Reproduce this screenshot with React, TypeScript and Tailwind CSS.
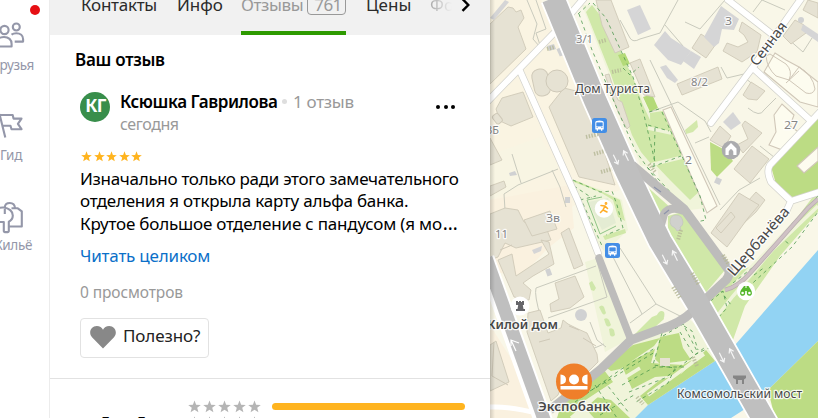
import type { ReactNode } from 'react'
import { clsx } from 'clsx'

const STAR = 'M6 0.4 L7.5 4.3 L11.8 4.5 L8.5 7.2 L9.6 11.3 L6 9 L2.4 11.3 L3.5 7.2 L0.2 4.5 L4.5 4.3 Z'

function Stars({ className, size }: { className?: string; size: number }) {
  return (
    <div className={clsx('flex', className)}>
      {[0, 1, 2, 3, 4].map((n) => (
        <svg key={n} width={size} height={size} viewBox="0 0 12 12" fill="currentColor">
          <path d={STAR} />
        </svg>
      ))}
    </div>
  )
}

function RailItem({ label, icon, className }: { label: string; icon: ReactNode; className?: string }) {
  return (
    <div className={clsx('flex h-[90px] flex-col items-end', className)}>
      <div className="h-[34px]">{icon}</div>
      <div className="whitespace-nowrap text-[13.5px] leading-[20px] tracking-[-0.35px]">{label}</div>
    </div>
  )
}

function Rail() {
  return (
    <nav className="relative h-full w-[50px] shrink-0 overflow-hidden border-r border-[#ececec] bg-white pt-[21px] text-[#9497a9]">
      <span className="absolute left-[30px] top-[5px] size-2.5 rounded-full bg-[#e60f14]" />
      <RailItem
        label="Друзья"
        className="pr-[15px]"
        icon={
          <svg width="40" height="30" viewBox="0 21 40 30" className="-mr-[6px]" fill="none" stroke="currentColor" strokeWidth="2.1" strokeLinejoin="round">
            <circle cx="4.5" cy="30" r="4.1" />
            <circle cx="16.3" cy="27" r="3.5" />
            <path d="M-4 46.5V44c0-4.3 3.3-7 8-7s7.6 2.7 7.6 7v2.5Z" />
            <path d="M11.5 34.6c1.3-1 2.8-1.4 4.8-1.4 4 0 6.8 2.2 6.8 6v2.4h-8.4" />
          </svg>
        }
      />
      <RailItem
        label="Гид"
        className="pr-[27px]"
        icon={
          <svg width="40" height="30" viewBox="0 111 40 30" className="-mr-[18px]" fill="none" stroke="currentColor" strokeWidth="2.1" strokeLinejoin="round">
            <path d="M-.5 114 5.3 137.5M-2 115h14.7l.8 3.6h8l-3.6 5.2 3.6 5.4H11.5l-1-3.4H3" />
          </svg>
        }
      />
      <RailItem
        label="Жильё"
        className="pr-[17px]"
        icon={
          <svg width="40" height="34" viewBox="0 198 40 34" className="-mr-[8px]" fill="none" stroke="currentColor" strokeWidth="2.1" strokeLinejoin="round">
            <path d="M-4 207.5c1.5-2.4 4.5-3.2 7.6-3 5.5.4 9.2 4 9.2 8 0 3.2-1.7 5-4 6.2V228c0 1.7-5 1.7-5 0v-9H-4" />
            <path d="M4.8 204.2c.2-2.6 2.4-4.2 5-4.2 3 0 5 2 5.2 5.2" />
            <path d="M11.5 205.3h6.3l4 3v15.2H9M4.8 206v5" />
          </svg>
        }
      />
    </nav>
  )
}

function Tabs() {
  return (
    <div className="relative h-[35px] shrink-0 overflow-hidden bg-[#f1f1f1] text-[17px] text-[#2b2b2b]">
      <div className="-mt-[8px] ml-[31px] flex h-[43px] whitespace-nowrap leading-[26px]">
        <span className="w-[96px] tracking-[-0.25px]">Контакты</span>
        <span className="w-[64px]">Инфо</span>
        <span className="flex h-full w-[105px] items-start border-b-4 border-[#2e9a00] text-[#999]">
          <span className="w-[66px] tracking-[-0.4px]">Отзывы</span>
          <span className="h-[23px] w-[39px] rounded border border-[#999] pl-[3px] text-center leading-[24px] tracking-[-0.5px]">761</span>
        </span>
        <span className="ml-[20px] w-[64px]">Цены</span>
        <span className="w-[22px] overflow-hidden bg-gradient-to-r from-[#aaa] to-[#f1f1f1] bg-clip-text text-transparent">Фото</span>
      </div>
      <svg className="absolute left-[410px] top-0" width="14" height="12" viewBox="0 0 14 12" fill="none" stroke="#000" strokeWidth="2.4">
        <path d="M2.5-1 8.3 5 2.5 10.8" />
      </svg>
    </div>
  )
}

function Review() {
  return (
    <section className="h-[344px] shrink-0 border-b border-[#e2e2e2] pt-[13px]">
      <h2 className="ml-[25px] text-[17px] font-semibold leading-[24px] tracking-[-0.28px]">Ваш отзыв</h2>
      <header className="ml-[30px] mt-[18px] flex h-[44px]">
        <div className="mt-[2px] flex size-[30px] shrink-0 items-center justify-center rounded-full bg-[#388e4b] pb-[3px] pl-px text-[17.5px] font-bold tracking-[-0.7px] text-white">КГ</div>
        <div className="ml-[10px] w-[315px]">
          <div className="flex items-center whitespace-nowrap leading-[23px]">
            <b className="w-[157px] text-[17px] font-semibold tracking-[-0.42px]">Ксюшка Гаврилова</b>
            <span className="mx-[5px] size-[5px] rounded-full bg-[#dedede]" />
            <span className="ml-px text-[17px] tracking-[-0.3px] text-[#999]">1 отзыв</span>
          </div>
          <div className="text-[16px] leading-[22px] tracking-[-0.4px] text-[#999]">сегодня</div>
        </div>
        <div className="mt-[15px] flex gap-[3.5px] pl-[1px]">
          <i className="size-1 rounded-full bg-black" />
          <i className="size-1 rounded-full bg-black" />
          <i className="size-1 rounded-full bg-black" />
        </div>
      </header>
      <Stars size={11} className="ml-[31px] mt-[17px] gap-[1.5px] text-[#ffb41f]" />
      <div className="ml-[30px] mt-[5.5px] whitespace-nowrap text-[17px] leading-[22.5px]">
        <p className="tracking-[-0.3px]">Изначально только ради этого замечательного</p>
        <p className="tracking-[-0.22px]">отделения я открыла карту альфа банка.</p>
        <p className="h-[22.5px] tracking-[-0.2px]">
          Крутое большое отделение с пандусом (я мо<span className="ml-px text-[19px] leading-none">…</span>
        </p>
      </div>
      <a className="ml-[30px] mt-[8.5px] block text-[17px] leading-[24px] tracking-[-0.2px] text-[#0b70c9]">Читать целиком</a>
      <div className="ml-[30px] mt-[13px] text-[15.5px] leading-[22px] tracking-[-0.1px] text-[#999]">0 просмотров</div>
      <button className="ml-[30px] mt-[15px] flex h-[40px] w-[129px] items-center rounded border border-[#e2e2e2] pb-[4px] pl-[9px]">
        <svg width="26" height="23" viewBox="0 0 26 23" fill="#888" className="mt-[3px]">
          <path d="M13 22.5 2 11.2C-2 6.5 1 0 6.8 0 9.7 0 12 1.6 13 3.7 14 1.6 16.3 0 19.2 0 25 0 28 6.5 24 11.2Z" />
        </svg>
        <span className="ml-[7px] text-[17px] leading-[24px] tracking-[-0.1px] text-[#222]">Полезно?</span>
      </button>
    </section>
  )
}

function Rating() {
  return (
    <section className="flex h-[60px] shrink-0 overflow-hidden">
      <div className="ml-[39px] mt-[36px] w-[99px] whitespace-nowrap text-[42px] font-bold leading-[32px]">4,4</div>
      <div className="mt-[20.5px] flex flex-col gap-[3.5px] text-[#b5b5b5]">
        <Stars size={13} className="gap-[2px]" />
        <Stars size={13} className="gap-[2px]" />
      </div>
      <div className="ml-[11px] mt-[24px] h-[7px] w-[193px] rounded-full bg-[#ffb41f]" />
    </section>
  )
}

const buildings = [
  '490,24 508,7 513,8 516,12 521,10 524,18 518,27 526,49 490,84',
  '496,109 502,98 523,92 533,117 511,126 500,121',
  '549,107 564,88 580,92 594,120 615,185 579,177',
  '490,138 502,160 490,165',
  '490,186 504,181 506,187 490,196',
  '596,0 611,0 629,47 615,53 602,25',
  '630,63 640,59 655,97 644,95',
  '605,75 609,74 614,90 618,100 622,102 630,126 627,129 618,112',
  '490,214 505,208 518,210 524,222 545,225 551,240 516,248 505,243 498,257 490,260',
  '524,220 550,211 557,229 532,236',
  '498,260 512,254 516,276 549,254 541,240 549,242 554,264 533,276 523,283 531,290 529,300 514,297',
  '561,233 569,228 583,265 574,269',
  '555,283 575,276 584,297 570,308 551,312 550,304 559,299',
  '528,313 540,310 548,333 561,328 563,320 568,324 578,329 587,333 597,354 598,362 580,380 565,377 558,395 551,401 527,332',
  '490,345 496,341 509,382 490,391',
  '677,84 718,67 722,79 682,95',
  '701,34 716,44 706,58 692,48',
  '742,22 761,35 757,52 742,62 723,51 727,43 738,47 748,42 744,35 739,31',
  '783,36 795,20 804,25 806,33 791,44',
  '808,0 818,3 818,18 803,10',
  '743,95 751,82 765,91 757,100 748,99',
  '720,126 731,136 724,148 710,140',
  '742,125 745,121 762,133 743,153 737,145 748,139',
  '752,146 769,159 750,183 734,169',
  '740,210 756,192 765,200 756,212 744,223',
  '711,233 739,193 759,205 748,218 727,247',
  '716,228 731,212 735,217 721,233',
]

const greyBuildings = [
  '654,45 665,31 671,38 691,51 681,65 668,60',
  '691,51 701,57 694,69 683,61',
  '721,6 739,19 734,30 722,29 719,43 714,47 704,37',
  '660,67 666,65 678,80 675,83 667,78',
  '803,24 818,34 818,42 801,30',
  '733,112 741,123 731,130 723,122',
  '627,10 640,5 651,29 638,35',
  '559,50 563,47 565,55 560,56',
  '532,250 542,246 541,251 534,254',
  '490,18 505,0 509,2 494,20',
]

const whiteBuildings = [
  '663,110 671,107 717,206 707,213',
  '775,53 786,60 799,67 818,82 818,107 800,102 764,72',
  '774,115 782,104 794,115 790,126 800,133 785,151 769,145 776,132',
  '797,166 818,147 818,161 804,173',
]

const parks = [
  '586,12 592,5 609,27 633,78 643,105 650,120 657,150 652,165 641,152 632,135 610,72',
  '650,113 663,111 701,190 690,200 670,180 651,160',
  '642,182 672,209 661,222 655,215',
  '668,228 668,216 682,212 725,270 703,296 690,285 668,252',
  '708,298 731,274 752,266 784,235 818,190 818,212 780,256 745,306 733,340 720,350 712,328',
  '632,337 652,317 662,313 664,319 655,327',
  '566,179 577,181 603,192 620,200 625,221 618,217 613,200 600,192',
  '603,236 625,229 626,233 605,240',
]

// riverside lawns under the embankment road
const brightParks = [
  '561,405 604,370 613,382 584,401 571,418 557,418',
  '604,366 633,345 660,338 654,346 620,369 611,371',
  '611,400 630,418 594,418 586,409 596,397',
  '622,366 655,349 651,363 683,365 692,360 680,375 655,377 632,389',
  '660,337 679,333 683,348 691,360 660,364 655,359',
  '640,396 660,380 681,374 706,350 715,361 648,405',
  '770,163 818,118 818,192 795,199 776,184',
  '818,341 768,390 775,418 818,418',
  '710,142 725,150 733,161 717,177 711,170',
]

const avenue = 'M553-2 595 100 626 170 645 210 660 241 698 304 767 425'
const sideRoads = 'M632 165 659 188 684 209 728 269Q731 274 726 280L693 311Q680 324 658 330L631 340 601 369 550 410'
const streets =
  'M486 103 556 31 585-3M520 71 578 201 598 253M803-4 753 67 711 123M728 0 773 35M753 68 810 120M822 110 770 165Q766 171 771 182L791 201 822 191M791 201 786 212'

function Arrows({ x, y }: { x: number; y: number }) {
  return (
    <g transform={`translate(${x} ${y}) rotate(-26)`} stroke="#fff" strokeOpacity=".85" strokeWidth="1.2" fill="none">
      <path d="M-5-5V5M-7.5 2 -5 5.5-2.5 2M6-3V7M3.5 0 6-4 8.5 0" />
    </g>
  )
}

function Bus({ x, y }: { x: number; y: number }) {
  return (
    <g transform={`translate(${x} ${y})`}>
      <rect x="-7.5" y="-7.5" width="15" height="15" rx="2.5" fill="#438ee6" />
      <path d="M-4.2 4V-3.2Q-4-5 0-5T4.2-3.2V4H2.8V5.3H1.5V4h-3V5.3h-1.3V4Z" fill="#fff" />
      <path d="M-2.8-2.7h5.6V.6h-5.6ZM-3 2h1.3M1.7 2H3" fill="#438ee6" stroke="#438ee6" strokeWidth=".7" />
    </g>
  )
}

interface MapLabel {
  text: string
  x: number
  y: number
  w: number
  size: number
  rotate?: number
  bold?: boolean
  muted?: boolean
}

const labels: MapLabel[] = [
  { text: '3/1', x: 576, y: 43, w: 17, size: 11, muted: true },
  { text: 'Дом Туриста', x: 575, y: 93, w: 75, size: 12 },
  { text: '3Б', x: 486, y: 134, w: 13, size: 11, muted: true },
  { text: '3', x: 725, y: 25, w: 7, size: 11, muted: true },
  { text: '8/2', x: 691, y: 86, w: 17, size: 11, muted: true },
  { text: '2', x: 685, y: 164, w: 7, size: 11, muted: true },
  { text: '27', x: 784, y: 129, w: 14, size: 11, muted: true },
  { text: '3в', x: 546, y: 222, w: 14, size: 11, muted: true },
  { text: '11', x: 495, y: 238, w: 13, size: 11, muted: true },
  { text: 'Сенная', x: 757, y: 67, w: 51, size: 14.5, rotate: -53 },
  { text: 'Щербанёва', x: 734, y: 277, w: 86, size: 14.5, rotate: -49 },
  { text: 'Жилой дом', x: 483, y: 329, w: 75, size: 12, bold: true },
  { text: 'Экспобанк', x: 538, y: 411, w: 72, size: 12.5, bold: true },
  { text: 'Комсомольский мост', x: 677, y: 398, w: 125, size: 12 },
]

function CityMap() {
  return (
    <svg className="block h-[418px] w-[328px] shrink-0" viewBox="490 0 328 418">
      <rect x="490" width="328" height="418" fill="#f9f7e8" />
      <path d="M490 0H541L584 105 620 190 575 205 490 260Z" fill="#faf4e2" />
      <path d="M490 155 540 137 559 168 490 200Z" fill="#f8f5e3" />
      <path d="M490 200 570 185 574 228 548 248 520 278 490 270ZM490 325 548 418H490Z" fill="#faf1df" />
      <path d="M582 5H600L633 78 658 130 658 170 640 165 615 90ZM648 112 660 108 706 208 690 210 660 185ZM566 179 603 190 622 200 628 230 605 252 595 240ZM585 262 598 258 627 340 605 352Z" fill="#f0f4da" />
      <path d="M556 418 604 368 633 343 690 320 710 338 720 358 648 407 640 418Z" fill="#f0f4da" />
      <path d="M818 250 735 345 715 361 648 405 635 418H731L745 409 768 390 818 341Z" fill="#92d3f3" />
      {parks.map((p) => <polygon key={p} points={p} fill="#d0e8a8" />)}
      {brightParks.map((p) => <polygon key={p} points={p} fill="#bcdc84" />)}
      <path d="M643 97 652 94 658 108 650 112ZM618 55 625 53 630 64 623 66Z" fill="#b4da78" />
      <path d="M589 283l3-2 4 7-2 3-3-1ZM599 307q3-3 5 0l2 6q-2 3-4 0ZM604 319q3-2 5 1l2 5q-3 3-5 0ZM609 329q3-2 5 1l1 5q-3 3-5 0ZM657 315q3-6 7-3 2 5-3 8Z" fill="#cfe7aa" />
      <path d="M685 130 691 125 697 120 698 127 693 132 686 134Z" fill="#d3e8ab" />
      <rect x="660" y="358" width="10" height="8" fill="#e6e2d3" />

      {/* yard outlines and paths */}
      <g fill="none" stroke="#c9cabd" strokeWidth="1">
        <path d="M536 0 546 29 536 33 541 48M527 0 537 24 533 39 540 47" />
        <path d="M505 210 504 194 518 185 558 169M552 170 560 187 566 207M512 154 521 183" />
        <path d="M620 20 630 38Q633 43 640 39L660 33 678 0M685 22 700 29 725 0M665 25 683 46" />
        <path d="M536 288 596 266M541 318Q534 295 536 288M548 318 607 297 596 258" />
        <path d="M590 322 597 340 606 347M571 358 604 344" />
        <path d="M612 255 642 314M620 248 656 304 682 317M630 323 656 304" />
        <path d="M650 112 678 102 705 121 711 132M650 60 720 205M695 143 709 137M721 67 727 78 744 74" />
        <path d="M748 108Q760 118 764 110L776 98M753 12 762 0 785 10M787 38 803 52 812 38M760 146 779 161" />
        <path d="M760 90 745 78M720 210 739 190 760 178" />
      </g>

      {buildings.map((p) => <polygon key={p} points={p} fill="#e6e2d3" stroke="#cfc9b8" strokeWidth=".9" />)}
      {greyBuildings.map((p) => <polygon key={p} points={p} fill="#d5d5d6" />)}
      {whiteBuildings.map((p) => <polygon key={p} points={p} fill="#fdfcef" stroke="#d0c7b8" strokeWidth="1.1" />)}
      <g fill="#e6e2d3" stroke="#cfc9b8">
        <rect x="533" y="69" width="16" height="27" rx="7" transform="rotate(-12 541 82)" />
        <circle cx="557" cy="81" r="11" />
        <rect x="494" y="114" width="7" height="10" rx="2" transform="rotate(-38 497 119)" />
      </g>
      <path d="M766 56 770 54 786 64Q793 71 789 80L776 76Q767 68 766 56ZM789 80 799 67Q813 75 815 89 813 95 806 93ZM786 83 799 71" fill="none" stroke="#d0c7b8" />
      <path d="M539 342 550 339M579 330 569 326M583 338 596 346M508 385 492 376 494 342M512 245 500 250" fill="none" stroke="#cfc9b8" />
      <g fill="#d0d1d2">
        <circle cx="581" cy="315" r="6" />
        <rect x="546" y="269" width="5" height="7" transform="rotate(-20 548 272)" />
        <rect x="715" y="178" width="6" height="6" transform="rotate(25 718 181)" />
        <rect x="558" y="48" width="5" height="8" transform="rotate(-25 560 52)" />
        <rect x="565" y="197" width="5" height="6" />
        <circle cx="801" cy="20" r="3" />
        <path d="M509 173 515 171 517 175 510 176ZM547 46 554 44 556 49 549 51Z" />
      </g>

      {/* dashed footpaths in the parks */}
      <g fill="none" stroke="#f0f4da" strokeWidth="3.5">
        <path d="M650 165 683 157M648 128 671 133M723 337 714 320 733 296 772 250 818 206M733 286 818 198M648 395 704 354M571 418 600 393 640 368" />
      </g>
      <g fill="none" stroke="#459448" strokeOpacity=".75" strokeWidth="1" strokeDasharray="3.5 3.5">
        <path d="M578 14 590 3 M593 3 606 18 633 77 644 115 655 162M579 14 592 50 612 97 635 150 657 181M623 68 630 75 639 67" />
        <path d="M649 112 659 109M648 125 669 131M652 167 681 156M655 128 654 166M648 168 686 209M662 112 700 196 706 220 696 222" />
        <path d="M573 180 600 192 612 191 617 205 623 228 606 235M580 200 596 196M580 197 603 248M574 186 592 198" />
        <path d="M575 402 620 370 655 348M590 391 604 383 655 352M604 381 629 413M595 385 617 418M622 385 655 367 684 367" />
        <path d="M662 333 653 365 675 368 668 383 636 402M680 332 694 355 715 345M663 336 683 324 697 351M629 392 665 378 704 348M600 415 634 395M684 326 692 331 698 350" />
        <path d="M708 305 716 320 727 308 723 291 708 303M720 290 731 305" />
        <path d="M733 283 752 268 784 237 789 227 818 196M743 292 792 247 818 212M754 275 765 267M780 237 789 244" />
      </g>
      <path d="M588 202 608 198 616 223 602 230Z" fill="#e4ecd3" />
      <path d="M587 200 602 197M587 200 600 234 616 226" fill="none" stroke="#8fc487" />
      <path d="M725 290Q738 287 751 272L778 242 808 208 818 199" fill="none" stroke="#b9adb0" strokeWidth="4.5" />
      <path d="M725 290Q738 287 751 272L778 242 808 208 818 199" fill="none" stroke="#cfc1c5" strokeWidth="3" />

      {/* white streets over their casing */}
      <g fill="none" strokeLinejoin="round" strokeLinecap="round">
        <path d={streets} stroke="#d2d2cc" strokeWidth="7.4" />
        <path d={streets} stroke="#fff" strokeWidth="6" />
        <path d="M490 407Q510 406 540 414M488 287 535 418" stroke="#fff" strokeWidth="5" />
      </g>

      {/* main roads */}
      <g fill="none" strokeLinejoin="round">
        <path d={avenue} stroke="#fff" strokeWidth="26" />
        <path d="M486 258 546 425" stroke="#fff" strokeWidth="17" />
        <path d={sideRoads} stroke="#bdbcbb" strokeWidth="9" />
        <path d="M599 258 631 340" stroke="#bdbcbb" strokeWidth="7.5" strokeLinecap="round" />
        <path d="M684 211Q670 205 664 214L660 229" stroke="#bdbcbb" strokeWidth="8" />
        <path d={avenue} stroke="#bfbfbf" strokeWidth="22.5" />
        <path d="M486 258 546 425" stroke="#bfbfbf" strokeWidth="13" />
      </g>
      <path d="M670 222Q670 215 676 215T683 222Q683 226 680 227L681 230 677 231 675 228Q670 226 670 222Z" fill="#d0d1cd" stroke="#c3c4bd" strokeWidth=".7" />
      <g stroke="#b4b695" strokeOpacity=".8" strokeWidth="4" strokeDasharray="1.4 1.4">
        <path d="M586 137 599 134M594 154 605 151M601 172 612 169M547 49 555 47M599 42 606 40M612 72 621 70M649 164 655 172M692 273 699 285M673 287 680 298M723 255 729 265M681 230 678 240M693 357 697 366M637 397 643 404" />
      </g>
      <Arrows x={620} y={157} />
      <Arrows x={669} y={257} />
      <Arrows x={726} y={355} />
      <path d="M511 340 516 351M511 346 511 340 519 343" fill="none" stroke="#fff" strokeWidth="1.2" />
      <path d="M654 187 661 192M664 214 669 210" stroke="#8f95ab" strokeWidth="1.3" />

      <Bus x={599.5} y={125.5} />
      <Bus x={612.5} y={250.5} />
      <circle cx="604" cy="208.5" r="9.2" fill="#fff" />
      <g fill="none" stroke="#ffac25" strokeWidth="1.6" strokeLinecap="round" strokeLinejoin="round">
        <path d="M601 205.5 605 206 603 210 607 212M605 206 607.5 208.5M603 210 600.5 212.5" />
        <circle cx="606" cy="203.5" r=".6" />
      </g>
      <circle cx="731" cy="150" r="9.3" fill="#ababae" />
      <path d="M725.5 155V148.500L731 143 736.500 148.500V155H733.300V151.500Q731 146.500 728.700 151.500V155Z" fill="#fff" />
      <circle cx="520" cy="306" r="9.5" fill="#fff" />
      <path d="M516 301h2v1h1v-1h2v1h1v-1h2v4h-1.2l.7 4H525v2h-9v-2h1.5l.7-4H516Z" fill="#66666a" />
      <circle cx="746" cy="291" r="9.2" fill="#fff" />
      <path d="M744 286h1.5v2h1V286h2l2.5 4q2 4-.2 5.5-4 1-4-3v-1.5h-1.6v1.5q0 4-4 3-2.2-1.5-.2-5.5Z" fill="#56b72d" />
      <circle cx="742.6" cy="293" r="1.3" fill="#fff" />
      <circle cx="749.4" cy="293" r="1.3" fill="#fff" />
      <circle cx="574" cy="381.5" r="18" fill="#ef7f2a" />
      <g fill="#fff">
        <path d="M560.5 374.5q5.5.5 5.5 5t-5.5 5ZM587.5 374.5q-5.5.5-5.5 5t5.5 5Z" />
        <circle cx="574" cy="379.5" r="5" />
        <rect x="560.5" y="386" width="27" height="3.5" />
      </g>
      <path d="M733 375.5h13v2.5l-2 1.5V384h-2v-4h-4v4h-2v-4.5l-3-1.5Z" fill="#858585" />

      <g className="font-['Noto_Sans',sans-serif]" stroke="#fff" strokeWidth="2.4" strokeOpacity=".85" strokeLinejoin="round" paintOrder="stroke">
        {labels.map((l) => (
          <text
            key={l.text}
            x={l.x}
            y={l.y}
            fontSize={l.size}
            fontWeight={l.bold ? 600 : 400}
            fill={l.muted ? '#858585' : '#484848'}
            textLength={l.w}
            lengthAdjust="spacingAndGlyphs"
            transform={l.rotate ? `rotate(${l.rotate} ${l.x} ${l.y})` : undefined}
          >
            {l.text}
          </text>
        ))}
      </g>
      <defs>
        <linearGradient id="edge">
          <stop stopOpacity=".16" />
          <stop offset="1" stopOpacity="0" />
        </linearGradient>
      </defs>
      <rect x="490" width="5" height="418" fill="url(#edge)" />
    </svg>
  )
}

export default function App() {
  return (
    <div className="flex h-[418px] w-[818px] overflow-hidden bg-white font-['Noto_Sans',sans-serif] text-black">
      <Rail />
      <main className="flex h-full w-[440px] shrink-0 flex-col overflow-hidden">
        <Tabs />
        <Review />
        <Rating />
      </main>
      <CityMap />
    </div>
  )
}
